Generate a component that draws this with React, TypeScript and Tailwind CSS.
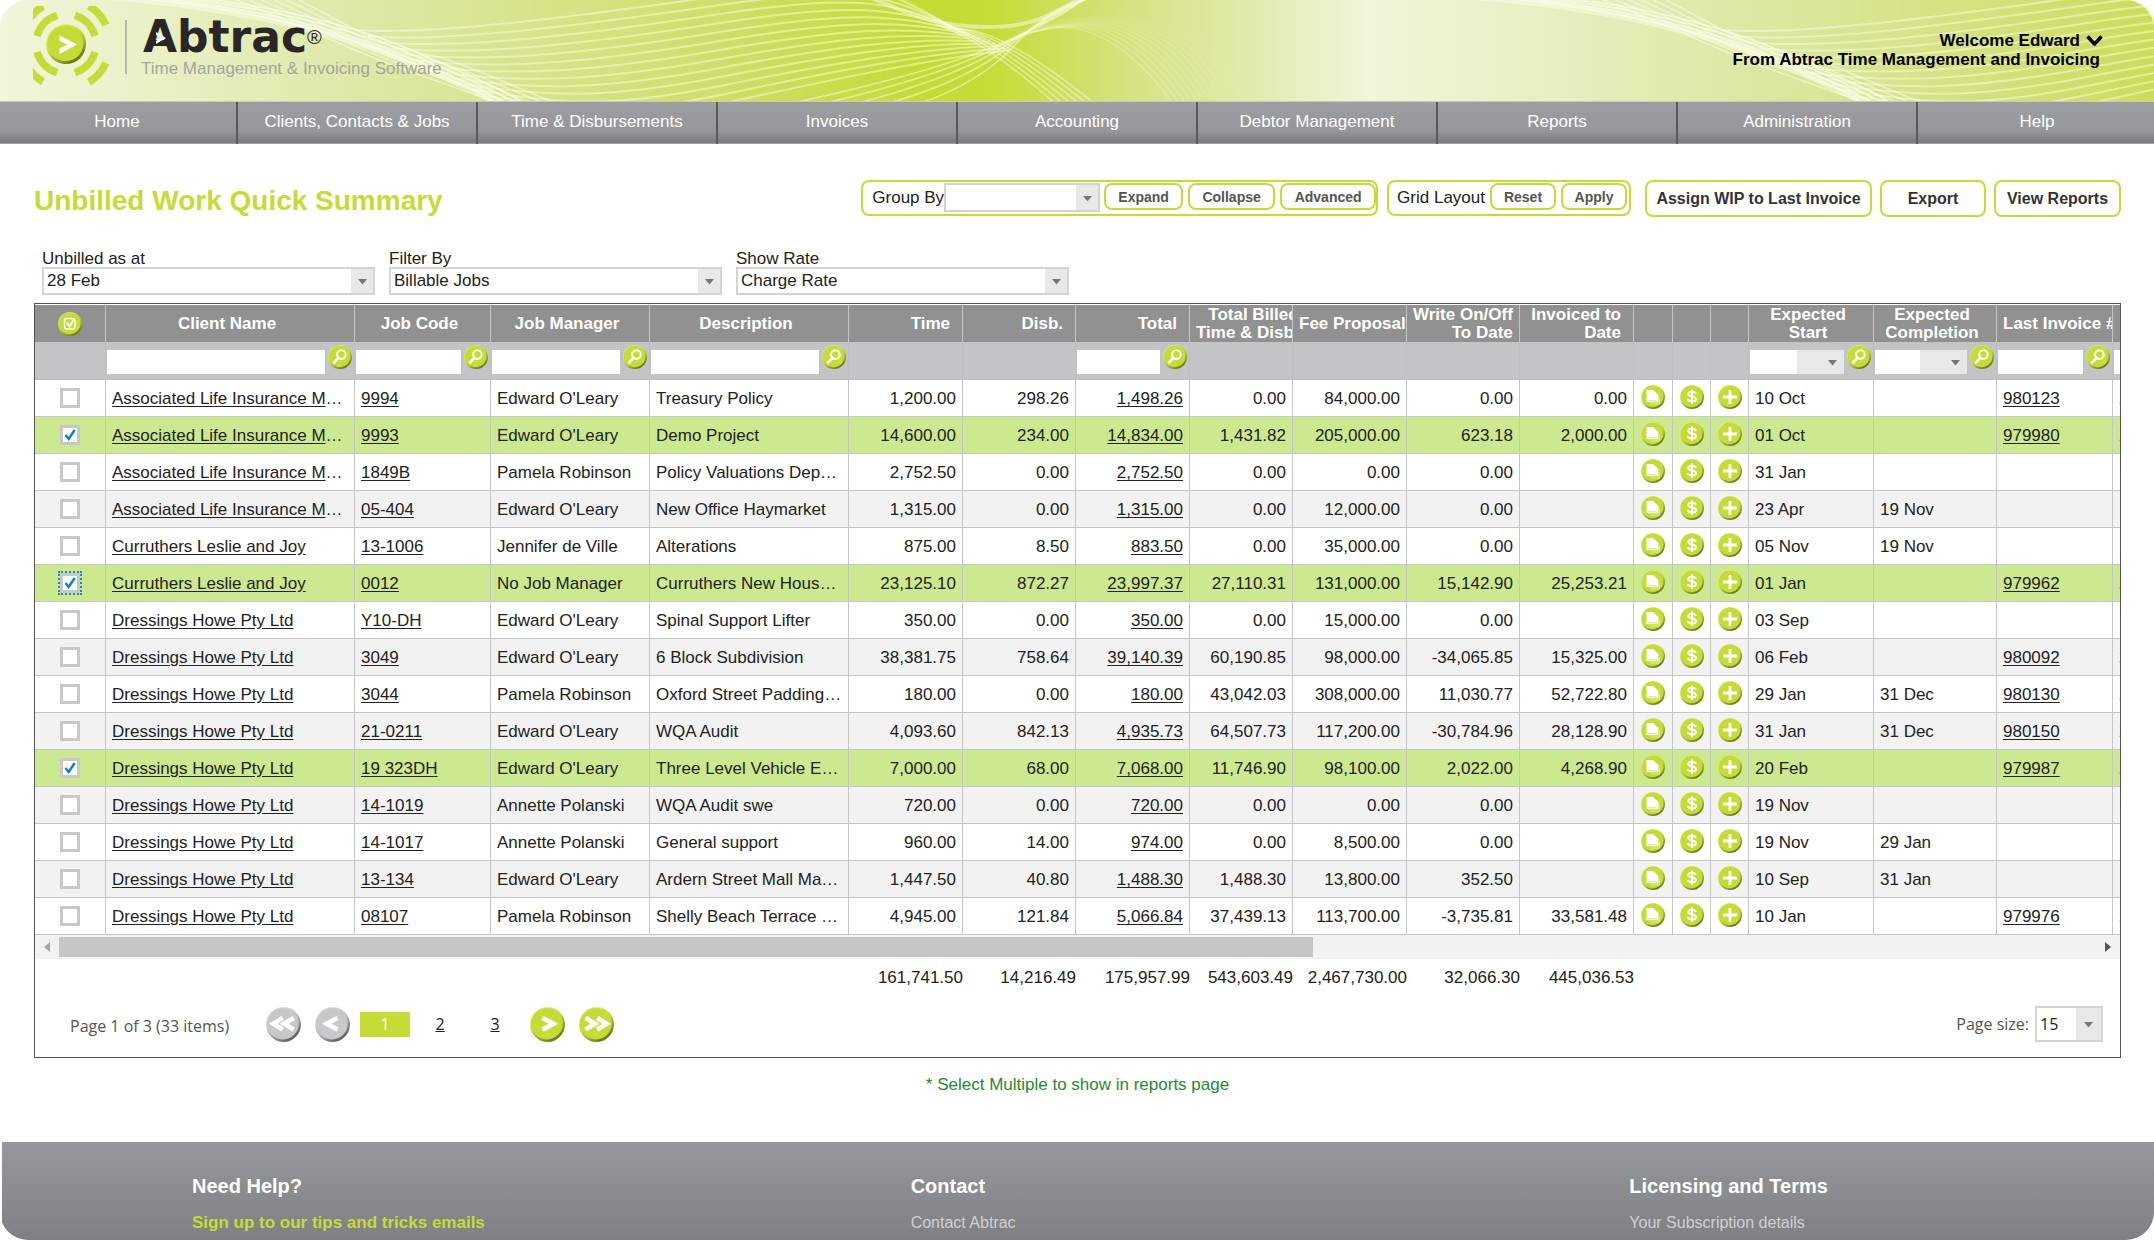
import type { ReactNode } from "react"

const navItems = [
  "Home",
  "Clients, Contacts & Jobs",
  "Time & Disbursements",
  "Invoices",
  "Accounting",
  "Debtor Management",
  "Reports",
  "Administration",
  "Help",
]

const columnWidths = [71, 249, 136, 159, 199, 114, 113, 114, 103, 114, 113, 114, 39, 38, 38, 125, 123, 116, 120]

type Job = {
  client: string
  code: string
  manager: string
  description: string
  // time, disb, total, total billed, fee proposal, write on/off, invoiced
  amounts: string[]
  start: string
  completion?: string
  invoice?: string
  selected?: boolean
  focused?: boolean
}

const insurance = "Associated Life Insurance Mutual"
const curruthers = "Curruthers Leslie and Joy"
const dressings = "Dressings Howe Pty Ltd"

const jobs: Job[] = [
  { client: insurance, code: "9994", manager: "Edward O'Leary", description: "Treasury Policy", amounts: ["1,200.00", "298.26", "1,498.26", "0.00", "84,000.00", "0.00", "0.00"], start: "10 Oct", invoice: "980123" },
  { client: insurance, code: "9993", manager: "Edward O'Leary", description: "Demo Project", amounts: ["14,600.00", "234.00", "14,834.00", "1,431.82", "205,000.00", "623.18", "2,000.00"], start: "01 Oct", invoice: "979980", selected: true },
  { client: insurance, code: "1849B", manager: "Pamela Robinson", description: "Policy Valuations Department", amounts: ["2,752.50", "0.00", "2,752.50", "0.00", "0.00", "0.00", ""], start: "31 Jan" },
  { client: insurance, code: "05-404", manager: "Edward O'Leary", description: "New Office Haymarket", amounts: ["1,315.00", "0.00", "1,315.00", "0.00", "12,000.00", "0.00", ""], start: "23 Apr", completion: "19 Nov" },
  { client: curruthers, code: "13-1006", manager: "Jennifer de Ville", description: "Alterations", amounts: ["875.00", "8.50", "883.50", "0.00", "35,000.00", "0.00", ""], start: "05 Nov", completion: "19 Nov" },
  { client: curruthers, code: "0012", manager: "No Job Manager", description: "Curruthers New House Build", amounts: ["23,125.10", "872.27", "23,997.37", "27,110.31", "131,000.00", "15,142.90", "25,253.21"], start: "01 Jan", invoice: "979962", selected: true, focused: true },
  { client: dressings, code: "Y10-DH", manager: "Edward O'Leary", description: "Spinal Support Lifter", amounts: ["350.00", "0.00", "350.00", "0.00", "15,000.00", "0.00", ""], start: "03 Sep" },
  { client: dressings, code: "3049", manager: "Edward O'Leary", description: "6 Block Subdivision", amounts: ["38,381.75", "758.64", "39,140.39", "60,190.85", "98,000.00", "-34,065.85", "15,325.00"], start: "06 Feb", invoice: "980092" },
  { client: dressings, code: "3044", manager: "Pamela Robinson", description: "Oxford Street Paddington", amounts: ["180.00", "0.00", "180.00", "43,042.03", "308,000.00", "11,030.77", "52,722.80"], start: "29 Jan", completion: "31 Dec", invoice: "980130" },
  { client: dressings, code: "21-0211", manager: "Edward O'Leary", description: "WQA Audit", amounts: ["4,093.60", "842.13", "4,935.73", "64,507.73", "117,200.00", "-30,784.96", "28,128.90"], start: "31 Jan", completion: "31 Dec", invoice: "980150" },
  { client: dressings, code: "19 323DH", manager: "Edward O'Leary", description: "Three Level Vehicle Entrance", amounts: ["7,000.00", "68.00", "7,068.00", "11,746.90", "98,100.00", "2,022.00", "4,268.90"], start: "20 Feb", invoice: "979987", selected: true },
  { client: dressings, code: "14-1019", manager: "Annette Polanski", description: "WQA Audit swe", amounts: ["720.00", "0.00", "720.00", "0.00", "0.00", "0.00", ""], start: "19 Nov" },
  { client: dressings, code: "14-1017", manager: "Annette Polanski", description: "General support", amounts: ["960.00", "14.00", "974.00", "0.00", "8,500.00", "0.00", ""], start: "19 Nov", completion: "29 Jan" },
  { client: dressings, code: "13-134", manager: "Edward O'Leary", description: "Ardern Street Mall Maintenance", amounts: ["1,447.50", "40.80", "1,488.30", "1,488.30", "13,800.00", "352.50", ""], start: "10 Sep", completion: "31 Jan" },
  { client: dressings, code: "08107", manager: "Pamela Robinson", description: "Shelly Beach Terrace Units", amounts: ["4,945.00", "121.84", "5,066.84", "37,439.13", "113,700.00", "-3,735.81", "33,581.48"], start: "10 Jan", invoice: "979976" },
]

const totals = ["161,741.50", "14,216.49", "175,957.99", "543,603.49", "2,467,730.00", "32,066.30", "445,036.53"]

const headers: { lines: string[]; align: "center" | "right" }[] = [
  { lines: ["Client Name"], align: "center" },
  { lines: ["Job Code"], align: "center" },
  { lines: ["Job Manager"], align: "center" },
  { lines: ["Description"], align: "center" },
  { lines: ["Time"], align: "right" },
  { lines: ["Disb."], align: "right" },
  { lines: ["Total"], align: "right" },
  { lines: ["Total Billed", "Time & Disb."], align: "right" },
  { lines: ["Fee Proposal"], align: "right" },
  { lines: ["Write On/Off", "To Date"], align: "right" },
  { lines: ["Invoiced to", "Date"], align: "right" },
  { lines: [""], align: "center" },
  { lines: [""], align: "center" },
  { lines: [""], align: "center" },
  { lines: ["Expected", "Start"], align: "center" },
  { lines: ["Expected", "Completion"], align: "center" },
  { lines: ["Last Invoice #"], align: "center" },
  { lines: [""], align: "center" },
]

const filterKinds = ["", "text", "text", "text", "text", "", "", "text", "", "", "", "", "", "", "", "date", "date", "text", "text"]

const footerColumns = [
  { title: "Need Help?", link: "Sign up to our tips and tricks emails", highlight: true },
  { title: "Contact", link: "Contact Abtrac", highlight: false },
  { title: "Licensing and Terms", link: "Your Subscription details", highlight: false },
]

/* Shared gradients for every round button on the page */
function Gradients() {
  return (
    <svg className="absolute h-0 w-0" aria-hidden="true">
      <defs>
        <linearGradient id="rim" x1="0.2" y1="0.1" x2="0.75" y2="0.95">
          <stop offset="0" stopColor="#e6f09a" />
          <stop offset="0.45" stopColor="#c3da35" />
          <stop offset="1" stopColor="#66741c" />
        </linearGradient>
        <linearGradient id="rimGrey" x1="0.2" y1="0.1" x2="0.75" y2="0.95">
          <stop offset="0" stopColor="#e4e4e5" />
          <stop offset="0.45" stopColor="#c4c4c6" />
          <stop offset="1" stopColor="#5c5c5e" />
        </linearGradient>
      </defs>
    </svg>
  )
}

function RoundIcon({ grey, className, children }: { grey?: boolean; className: string; children: ReactNode }) {
  return (
    <svg viewBox="0 0 24 24" className={className} aria-hidden="true">
      <circle cx="12" cy="12" r="12" fill={grey ? "url(#rimGrey)" : "url(#rim)"} />
      <circle cx="11.6" cy="11.4" r="10.8" fill={grey ? "#c8c8ca" : "#c5dc37"} />
      {children}
    </svg>
  )
}

function SearchButton({ label }: { label: string }) {
  return (
    <button type="button" aria-label={label} className="-mt-[5px] shrink-0 self-start">
      <RoundIcon className="size-6">
        <circle cx="13.4" cy="9.6" r="4.3" fill="none" stroke="#fff" strokeWidth="2" />
        <path d="M10.4 12.8 6 17.6" stroke="#fff" strokeWidth="2.6" strokeLinecap="round" />
      </RoundIcon>
    </button>
  )
}

function Arrow({ className }: { className: string }) {
  return (
    <svg viewBox="0 0 10 6" className={className} aria-hidden="true">
      <path d="M0 0h10L5 6z" fill="#777" />
    </svg>
  )
}

function SelectBox({ id, label, value, className, arrow = "w-[22px]" }: { id: string; label?: string; value: string; className: string; arrow?: string }) {
  return (
    <span className={`relative flex border-2 border-[#d4d4d4] bg-white ${className}`}>
      <select id={id} aria-label={label} defaultValue={value} className="min-w-0 flex-1 appearance-none bg-transparent pl-[3px] leading-5 text-[#222] outline-none">
        <option>{value}</option>
      </select>
      <span className={`pointer-events-none absolute inset-y-0 right-0 flex items-center justify-center bg-[#e8e8e8] pt-[2px] ${arrow}`}>
        <Arrow className="w-[9px]" />
      </span>
    </span>
  )
}

/* One 1367px wide piece of the banner artwork */
function Wave() {
  const strands = Array.from({ length: 13 }, (_, i) => i)
  return (
    <g fill="none" stroke="#fbfde9">
      <path d="M75 -6C230 4 330 30 400 58S470 90 510 108" strokeWidth="7" opacity="0.5" />
      {[0, 1, 2, 3].map((i) => (
        <path key={i} d={`M${90 + i * 18} -6C${240 + i * 10} ${4 - i} ${345 + i * 6} ${34 - i * 2} ${410 + i * 5} ${62 - i * 2}S${475 + i * 6} ${90 - i * 2} ${505 + i * 9} 108`} strokeWidth="2" opacity="0.7" />
      ))}
      {[0, 1, 2, 3, 4, 5].map((i) => (
        <path key={i} d={`M${226 + i * 13} -4C${290 + i * 10} 20 ${350 + i * 5} ${50 - i} ${400 + i * 4} ${68 - i * 3}S${470 + i * 8} ${92 - i} ${520 + i * 12} 112`} strokeWidth="1.5" opacity="0.55" />
      ))}
      {strands.map((i) => (
        <path
          key={i}
          d={`M${356 + i * 12} ${30 + i * 6}C${430 + i * 14} ${36 + i * 7} ${580 + i * 4} ${16 + i * 9} ${720} ${-4 + i * 9}S${885 + i * 3} ${-12 + i * 6} ${950 + i * 5} ${26 + i * 2}`}
          strokeWidth="2"
          opacity="0.5"
        />
      ))}
      {[0, 1, 2, 3, 4, 5].map((i) => (
        <path key={i} d={`M${935 + i * 5} ${24 + i}Q${985 + i * 4} ${40 - i * 2} ${1060 + i * 8} 108`} strokeWidth="1.5" opacity="0.5" />
      ))}
      {[0, 1, 2, 3, 4].map((i) => (
        <path key={i} d={`M${770 + i * 34} 108Q${930 + i * 12} ${74 + i * 3} ${1000 + i * 4} 44T${1086 + i * 4} -4`} strokeWidth="1.8" opacity="0.5" />
      ))}
      <path d="M855 -8C905 10 930 27 986 27S1050 12 1090 -6" strokeWidth="4" opacity="0.5" />
      {strands.map((i) => (
        <path key={i} d={`M${1000 + i * 3} ${46 - i * 2}C${1060 + i * 8} ${14 - i} ${1110 + i * 9} ${18 + i} ${1175 + i * 5} ${106 - i * 2}`} strokeWidth="1.5" opacity={0.24 - i * 0.016} />
      ))}
    </g>
  )
}

function Banner() {
  return (
    <svg className="absolute inset-0 h-full w-full" viewBox="0 0 2154 102" preserveAspectRatio="xMinYMin slice" aria-hidden="true">
      <defs>
        <linearGradient id="sky" gradientUnits="userSpaceOnUse" x1="0" x2="1367" y1="0" y2="0" spreadMethod="repeat">
          <stop offset="0" stopColor="#f1f5da" />
          <stop offset="0.08" stopColor="#ebf2cb" />
          <stop offset="0.27" stopColor="#dde8a6" />
          <stop offset="0.52" stopColor="#cfdf6a" />
          <stop offset="0.68" stopColor="#c4db33" />
          <stop offset="0.73" stopColor="#c6dc3a" />
          <stop offset="0.83" stopColor="#d5e383" />
          <stop offset="0.92" stopColor="#e2ebb0" />
          <stop offset="1" stopColor="#f1f5da" />
        </linearGradient>
      </defs>
      <rect width="2154" height="102" fill="url(#sky)" />
      <Wave />
      <g transform="translate(1367 0)">
        <Wave />
      </g>
    </svg>
  )
}

function Logo() {
  return (
    <a href="#home" aria-label="Abtrac" className="relative flex text-[#2a2627]">
      <svg viewBox="-33 -38 78 82" className="h-[82px] w-[78px]" aria-hidden="true">
        <g fill="none" stroke="#c5dc37" strokeWidth="7.5">
          <path d="M29 8A30 30 0 0 1 8.8 28.7M-29 8A30 30 0 0 0-8.8 28.7M29-8A30 30 0 0 0 8.8-28.7M-29-8A30 30 0 0 1-8.8-28.7" />
          <path d="M40 19A44 44 0 0 1 23 38M-40 19A44 44 0 0 0-23 38M40-19A44 44 0 0 0 23-38M-40-19A44 44 0 0 1-23-38" />
        </g>
        <circle r="20" fill="url(#rim)" />
        <circle cx="-0.6" cy="-0.8" r="18" fill="#c5dc37" />
        <path d="M-6.500-8.500 11 .5-6.500 10v-5.500L1.500.5-6.500-3z" fill="#fff" />
      </svg>
      <span className="mx-[14px] my-[14px] w-[2px] bg-[#b7bbaa]" />
      <span className="flex flex-col pt-2">
        <span className="flex items-start pl-[2px]">
          <span className="font-['DejaVu_Sans'] text-[44px] leading-[46px] font-bold">Abtrac</span>
          <span className="pt-[13px] text-[20px] leading-5">®</span>
        </span>
        <span className="text-[17px] leading-[18px] text-[#a5a5a0]">Time Management &amp; Invoicing Software</span>
      </span>
      <svg viewBox="0 0 10 12" className="absolute top-[26px] left-[123px] w-[10px]" aria-hidden="true">
        <path d="M0 0 10 6 0 12V9L5 6 0 3z" fill="#fff" />
      </svg>
    </a>
  )
}

function SmallButton({ className, children }: { className: string; children: ReactNode }) {
  return (
    <button type="button" className={`h-[27px] rounded-lg border-2 border-[#c5dc37] bg-white text-[14px] leading-5 font-bold text-[#555] ${className}`}>
      {children}
    </button>
  )
}

function LargeButton({ className, children }: { className: string; children: ReactNode }) {
  return (
    <button type="button" className={`h-[37px] rounded-lg border-2 border-[#c5dc37] bg-white text-[16px] leading-5 font-bold text-[#333] ${className}`}>
      {children}
    </button>
  )
}

function Toolbar() {
  return (
    <div className="flex items-start">
      <div className="flex h-9 rounded-lg border-2 border-[#c5dc37] pt-px pl-[9px]">
        <label htmlFor="group-by" className="pt-[5px]">Group By</label>
        <SelectBox id="group-by" value="" className="h-[29px] w-[156px]" />
        <div className="flex gap-[5px] pl-1">
          <SmallButton className="w-[79px]">Expand</SmallButton>
          <SmallButton className="w-[87px]">Collapse</SmallButton>
          <SmallButton className="w-[96px]">Advanced</SmallButton>
        </div>
      </div>
      <div className="ml-[9px] flex h-9 gap-[5px] rounded-lg border-2 border-[#c5dc37] pt-px pr-[2px] pl-2">
        <span className="pt-[5px]">Grid Layout</span>
        <SmallButton className="w-[66px]">Reset</SmallButton>
        <SmallButton className="w-[66px]">Apply</SmallButton>
      </div>
      <div className="ml-[14px] flex gap-2">
        <LargeButton className="w-[227px]">Assign WIP to Last Invoice</LargeButton>
        <LargeButton className="w-[106px]">Export</LargeButton>
        <LargeButton className="w-[127px]">View Reports</LargeButton>
      </div>
    </div>
  )
}

function Filter({ id, label, value }: { id: string; label: string; value: string }) {
  return (
    <div className="flex flex-col">
      <label htmlFor={id} className="leading-4">{label}</label>
      <SelectBox id={id} value={value} className="h-7 w-[333px]" />
    </div>
  )
}

function Columns() {
  return (
    <colgroup>
      {columnWidths.map((width, i) => (
        <col key={i} style={{ width }} />
      ))}
    </colgroup>
  )
}

function RowCheckbox({ job }: { job: Job }) {
  return (
    <span className={`relative mx-auto flex size-5 ${job.focused ? "outline-2 outline-dotted outline-[#1c87c9]" : ""}`}>
      <input type="checkbox" aria-label={`Select job ${job.code}`} defaultChecked={job.selected} className="peer size-5 appearance-none border-[3px] border-[#c8c8c8] bg-white" />
      <svg viewBox="0 0 20 20" className="pointer-events-none absolute inset-0 hidden peer-checked:block" aria-hidden="true">
        <path d="m5.500 10 3.200 4 6-9" fill="none" stroke="#0b7fd0" strokeWidth="2.400" />
      </svg>
    </span>
  )
}

function JobRow({ job, striped }: { job: Job; striped: boolean }) {
  const background = job.selected ? "bg-[#cde98f]" : striped ? "bg-[#f2f2f2]" : "bg-white"
  const cell = "h-[37px] border-r border-b border-[#c6c6c8] px-[6px] pt-[2px] truncate"
  const iconCell = "h-[37px] border-r border-b border-[#c6c6c8] pb-[2px]"
  return (
    <tr className={background}>
      <td className="h-[37px] border-r border-b border-[#c6c6c8]">
        <RowCheckbox job={job} />
      </td>
      <td className={cell}><a href="#client" className="underline underline-offset-2">{job.client}</a></td>
      <td className={cell}><a href="#job" className="underline underline-offset-2">{job.code}</a></td>
      <td className={cell}>{job.manager}</td>
      <td className={cell}>{job.description}</td>
      {job.amounts.map((amount, i) => (
        <td key={i} className={`${cell} text-right`}>
          {i === 2 ? <a href="#wip" className="underline underline-offset-2">{amount}</a> : amount}
        </td>
      ))}
      <td className={iconCell}>
        <button type="button" aria-label="View job report" className="mx-auto block">
          <RoundIcon className="size-6">
            <path d="M5.500 5h6.500l5.500 5v7h-12z" fill="#fff" />
            <path d="M7.500 15.500h8M7.500 17h10V11M18.500 13v6h-9" fill="none" stroke="#dfe9a0" strokeWidth="1" />
          </RoundIcon>
        </button>
      </td>
      <td className={iconCell}>
        <button type="button" aria-label="Invoice job" className="mx-auto block">
          <RoundIcon className="size-6">
            <path d="M16 8.800C15.300 7.200 14 6.700 12 6.700c-2.200 0-3.700.8-3.700 2.400 0 3.300 7.700 1.700 7.700 5 0 1.700-1.700 2.500-4 2.500-2.200 0-3.600-.7-4.200-2.400M12 4.600v14.200" fill="none" stroke="#fff" strokeWidth="2" />
          </RoundIcon>
        </button>
      </td>
      <td className={iconCell}>
        <button type="button" aria-label="Add entry" className="mx-auto block">
          <RoundIcon className="size-6">
            <path d="M12 5v14M5 12h14" stroke="#fff" strokeWidth="2.800" />
          </RoundIcon>
        </button>
      </td>
      <td className={cell}>{job.start}</td>
      <td className={cell}>{job.completion}</td>
      <td className={cell}>{job.invoice && <a href="#invoice" className="underline underline-offset-2">{job.invoice}</a>}</td>
      <td className={cell}>{job.invoice && "2"}</td>
    </tr>
  )
}

function FilterCell({ kind, name }: { kind: string; name: string }) {
  return (
    <td className="h-[37px] border-r border-b border-[#bdbec0] p-0 align-top">
      {kind && (
        <div className="flex gap-[3px] pt-[7px] pr-[2px] pl-px">
          {kind === "text" ? (
            <input type="text" aria-label={`Filter ${name}`} className="h-6 min-w-0 flex-1 bg-white px-1 outline-none" />
          ) : (
            <span className="relative flex h-6 min-w-0 flex-1 bg-white">
              <select aria-label={`Filter ${name}`} className="w-full appearance-none bg-transparent outline-none" />
              <span className="pointer-events-none absolute inset-y-0 right-0 flex w-[47px] items-center justify-end bg-[#e8e8e8] pt-[2px] pr-[7px]">
                <Arrow className="w-[9px]" />
              </span>
            </span>
          )}
          <SearchButton label={`Search ${name}`} />
        </div>
      )}
    </td>
  )
}

function JobGrid() {
  return (
    <div className="overflow-hidden pt-px">
      <table className="w-[2198px] table-fixed border-separate border-spacing-0">
        <Columns />
        <thead>
          <tr className="bg-[#919191] text-white">
            <th className="h-[38px] border-r border-b border-[#c3c4c6]">
              <button type="button" aria-label="Select all" className="mx-auto block">
                <RoundIcon className="size-6">
                  <rect x="6.500" y="6.500" width="10.500" height="10.500" rx="2.500" fill="none" stroke="#fff" strokeWidth="1.500" />
                  <path d="m8.800 10.500 2.800 4L16 7" fill="none" stroke="#fff" strokeWidth="1.800" />
                </RoundIcon>
              </button>
            </th>
            {headers.map((header, i) => (
              <th key={i} className="h-[38px] overflow-hidden border-r border-b border-[#c3c4c6] pt-px pr-3 pb-0 pl-[6px] font-bold">
                <div className={`w-max min-w-full leading-[18px] ${header.align === "right" ? "text-right" : "text-center"}`}>
                  {header.lines.map((line) => (
                    <div key={line}>{line}</div>
                  ))}
                </div>
              </th>
            ))}
          </tr>
          <tr className="bg-[#c3c4c6]">
            {filterKinds.map((kind, i) => (
              <FilterCell key={i} kind={kind} name={i > 0 ? headers[i - 1].lines.join(" ") : ""} />
            ))}
          </tr>
        </thead>
        <tbody>
          {jobs.map((job, i) => (
            <JobRow key={job.code} job={job} striped={i % 2 === 1} />
          ))}
        </tbody>
      </table>
      {/* Horizontal scroll bar */}
      <div className="flex h-6 items-center justify-between bg-[#f2f2f2] px-2">
        <svg viewBox="0 0 6 10" className="h-[10px] w-2" aria-hidden="true"><path d="M6 0v10L0 5z" fill="#a5a5a5" /></svg>
        <div className="mx-2 flex-1">
          <div className="h-5 w-8/13 bg-[#c6c6c6]" />
        </div>
        <svg viewBox="0 0 6 10" className="h-[10px] w-2" aria-hidden="true"><path d="M0 0v10l6-5z" fill="#555" /></svg>
      </div>
      <table className="w-[2198px] table-fixed border-separate border-spacing-0">
        <Columns />
        <tbody>
          <tr>
            <td className="h-[37px]" colSpan={5} />
            {totals.map((total) => (
              <td key={total} className="text-right whitespace-nowrap">{total}</td>
            ))}
            <td colSpan={7} />
          </tr>
        </tbody>
      </table>
    </div>
  )
}

function PagerIcon({ grey, label, d }: { grey?: boolean; label: string; d: string }) {
  return (
    <button type="button" aria-label={label} disabled={grey}>
      <RoundIcon grey={grey} className="size-[35px]">
        <path d={d} fill="none" stroke="#fff" strokeWidth="3.200" />
      </RoundIcon>
    </button>
  )
}

function Pager() {
  return (
    <div className="flex h-14 items-center justify-between pr-[17px] pl-[35px] text-[#555]">
      <div className="flex items-center">
        <span className="w-[196px] pt-1 font-['Open_Sans'] text-[16px]">Page 1 of 3 (33 items)</span>
        <div className="flex items-center gap-[14px]">
          <PagerIcon grey label="First page" d="M11.500 7.500 5 11.500l6.500 4M19 7.500l-6.500 4 6.500 4" />
          <PagerIcon grey label="Previous page" d="M15.500 7.500 8 11.500l7.500 4" />
        </div>
        <div className="mx-[10px] flex items-center gap-[5px] text-center font-['Open_Sans'] text-[16px] leading-[25px]">
          <span className="w-[50px] bg-[#c5dc37] text-white">1</span>
          <a href="#page-2" className="w-[50px] text-[#222] underline">2</a>
          <a href="#page-3" className="w-[50px] text-[#222] underline">3</a>
        </div>
        <div className="flex items-center gap-[14px]">
          <PagerIcon label="Next page" d="m8.500 7.500 7.500 4-7.500 4" />
          <PagerIcon label="Last page" d="m4.500 7.500 6.500 4-6.500 4M12.500 7.500l6.500 4-6.500 4" />
        </div>
      </div>
      <div className="flex items-center gap-[6px] font-['Open_Sans'] text-[16px]">
        <label htmlFor="page-size">Page size:</label>
        <SelectBox id="page-size" value="15" className="h-9 w-[68px]" arrow="w-[25px]" />
      </div>
    </div>
  )
}

export default function App() {
  return (
    <div className="flex min-h-screen flex-col overflow-hidden rounded-[28px] bg-white font-['Liberation_Sans',Arial,sans-serif] text-[17px] leading-5 text-[#222]">
      <Gradients />
      <header className="relative h-[102px] overflow-hidden border-b border-[#c9cbb8]">
        <Banner />
        <div className="relative flex items-start justify-between pt-[6px] pr-[54px] pl-[33px]">
          <Logo />
          <div className="pt-[25px] text-right leading-[19px] font-bold text-black">
            <button type="button" className="-mr-[3px] inline-flex items-center gap-[6px] font-bold">
              Welcome Edward
              <svg viewBox="0 0 17 11" className="w-[17px]" aria-hidden="true">
                <path d="m1.500 1.500 7 7.500 7-7.500" fill="none" stroke="#000" strokeWidth="3.500" />
              </svg>
            </button>
            <p>From Abtrac Time Management and Invoicing</p>
          </div>
        </div>
      </header>

      <nav className="overflow-hidden">
        <ul className="-mr-[2px] -ml-[2px] flex">
          {navItems.map((item) => (
            <li key={item} className="flex-1 border-r-2 border-[#58595b] last:border-r-0">
              <a href="#menu" className="flex h-[42px] items-center justify-center border-b border-[#a0a0a2] bg-gradient-to-b from-[#9d9ea1] via-[#96979a] via-70% to-[#7b7c7f] pb-[2px] whitespace-nowrap text-white">
                {item}
              </a>
            </li>
          ))}
        </ul>
      </nav>

      <main className="flex-1 pt-9 pr-[33px] pb-[47px] pl-[34px]">
        <div className="flex items-center justify-between">
          <h1 className="pt-1 text-[28px] leading-8 font-bold text-[#c5dc37]">Unbilled Work Quick Summary</h1>
          <Toolbar />
        </div>
        <div className="mt-[34px] ml-2 flex gap-[14px]">
          <Filter id="as-at" label="Unbilled as at" value="28 Feb" />
          <Filter id="filter-by" label="Filter By" value="Billable Jobs" />
          <Filter id="show-rate" label="Show Rate" value="Charge Rate" />
        </div>
        <section className="mt-2 border border-[#555] pb-[5px]">
          <JobGrid />
          <Pager />
        </section>
        <p className="mt-[17px] text-center text-[#1f8a2f]">* Select Multiple to show in reports page</p>
      </main>

      <footer className="ml-[2px] grid grid-cols-3 gap-x-1 bg-gradient-to-b from-[#96989b] to-[#7f8083] pt-[34px] pb-[7px]">
        {footerColumns.map((column) => (
          <div key={column.title} className="pl-[190px]">
            <h2 className="text-[20px] leading-5 font-bold text-white">{column.title}</h2>
            <a href="#footer" className={`mt-[17px] block ${column.highlight ? "font-bold text-[#c5dc37]" : "text-[16px] text-[#d0d0d2]"}`}>{column.link}</a>
          </div>
        ))}
      </footer>
    </div>
  )
}
